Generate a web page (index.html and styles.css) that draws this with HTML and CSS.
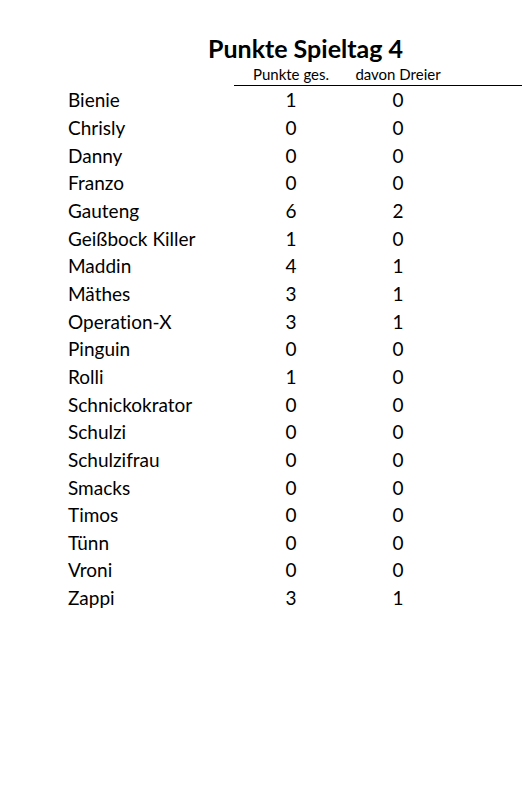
FILE: index.html
```html
<!DOCTYPE html>
<html lang="de">
<head>
<meta charset="utf-8">
<link rel="stylesheet" href="styles.css">
</head>
<body>
<div class="sheet">
  <h1 class="title">Punkte Spieltag 4</h1>
  <div class="head">
    <span class="hname"></span>
    <span class="hcol c1">Punkte ges.</span>
    <span class="hcol c2">davon Dreier</span>
  </div>
  <div class="rows">
    <div class="row"><span class="name">Bienie</span><span class="num c1">1</span><span class="num c2">0</span></div>
    <div class="row"><span class="name">Chrisly</span><span class="num c1">0</span><span class="num c2">0</span></div>
    <div class="row"><span class="name">Danny</span><span class="num c1">0</span><span class="num c2">0</span></div>
    <div class="row"><span class="name">Franzo</span><span class="num c1">0</span><span class="num c2">0</span></div>
    <div class="row"><span class="name">Gauteng</span><span class="num c1">6</span><span class="num c2">2</span></div>
    <div class="row"><span class="name">Geißbock Killer</span><span class="num c1">1</span><span class="num c2">0</span></div>
    <div class="row"><span class="name">Maddin</span><span class="num c1">4</span><span class="num c2">1</span></div>
    <div class="row"><span class="name">Mäthes</span><span class="num c1">3</span><span class="num c2">1</span></div>
    <div class="row"><span class="name">Operation-X</span><span class="num c1">3</span><span class="num c2">1</span></div>
    <div class="row"><span class="name">Pinguin</span><span class="num c1">0</span><span class="num c2">0</span></div>
    <div class="row"><span class="name">Rolli</span><span class="num c1">1</span><span class="num c2">0</span></div>
    <div class="row"><span class="name">Schnickokrator</span><span class="num c1">0</span><span class="num c2">0</span></div>
    <div class="row"><span class="name">Schulzi</span><span class="num c1">0</span><span class="num c2">0</span></div>
    <div class="row"><span class="name">Schulzifrau</span><span class="num c1">0</span><span class="num c2">0</span></div>
    <div class="row"><span class="name">Smacks</span><span class="num c1">0</span><span class="num c2">0</span></div>
    <div class="row"><span class="name">Timos</span><span class="num c1">0</span><span class="num c2">0</span></div>
    <div class="row"><span class="name">Tünn</span><span class="num c1">0</span><span class="num c2">0</span></div>
    <div class="row"><span class="name">Vroni</span><span class="num c1">0</span><span class="num c2">0</span></div>
    <div class="row"><span class="name">Zappi</span><span class="num c1">3</span><span class="num c2">1</span></div>
  </div>
</div>
</body>
</html>
```
FILE: styles.css
```css
html, body {
  margin: 0;
  padding: 0;
  background: #ffffff;
}
body {
  font-family: Lato, "Open Sans", sans-serif;
  font-variant-ligatures: none;
  color: #000000;
  width: 522px;
  height: 809px;
  overflow: hidden;
}
.sheet {
  padding-top: 34px;
}
.title {
  margin: 0 0 0 208px;
  font-size: 25px;
  font-weight: 700;
  line-height: 28px;
  height: 28px;
}
.head {
  display: grid;
  grid-template-columns: 234px 114px 100px 1fr;
  height: 24px;
  align-items: center;
}
.hcol {
  font-size: 15px;
  text-align: center;
  line-height: 17px;
  border-bottom: 1px solid #000;
  padding: 4px 0 2px;
}
.head::after {
  content: "";
  align-self: stretch;
  border-bottom: 1px solid #000;
}
.rows {
  display: flex;
  flex-direction: column;
}
.row {
  display: grid;
  grid-template-columns: 234px 114px 100px;
  height: 27.67px;
  align-items: center;
  font-size: 19px;
}
.name {
  padding-left: 68px;
}
.num {
  text-align: center;
}
```
